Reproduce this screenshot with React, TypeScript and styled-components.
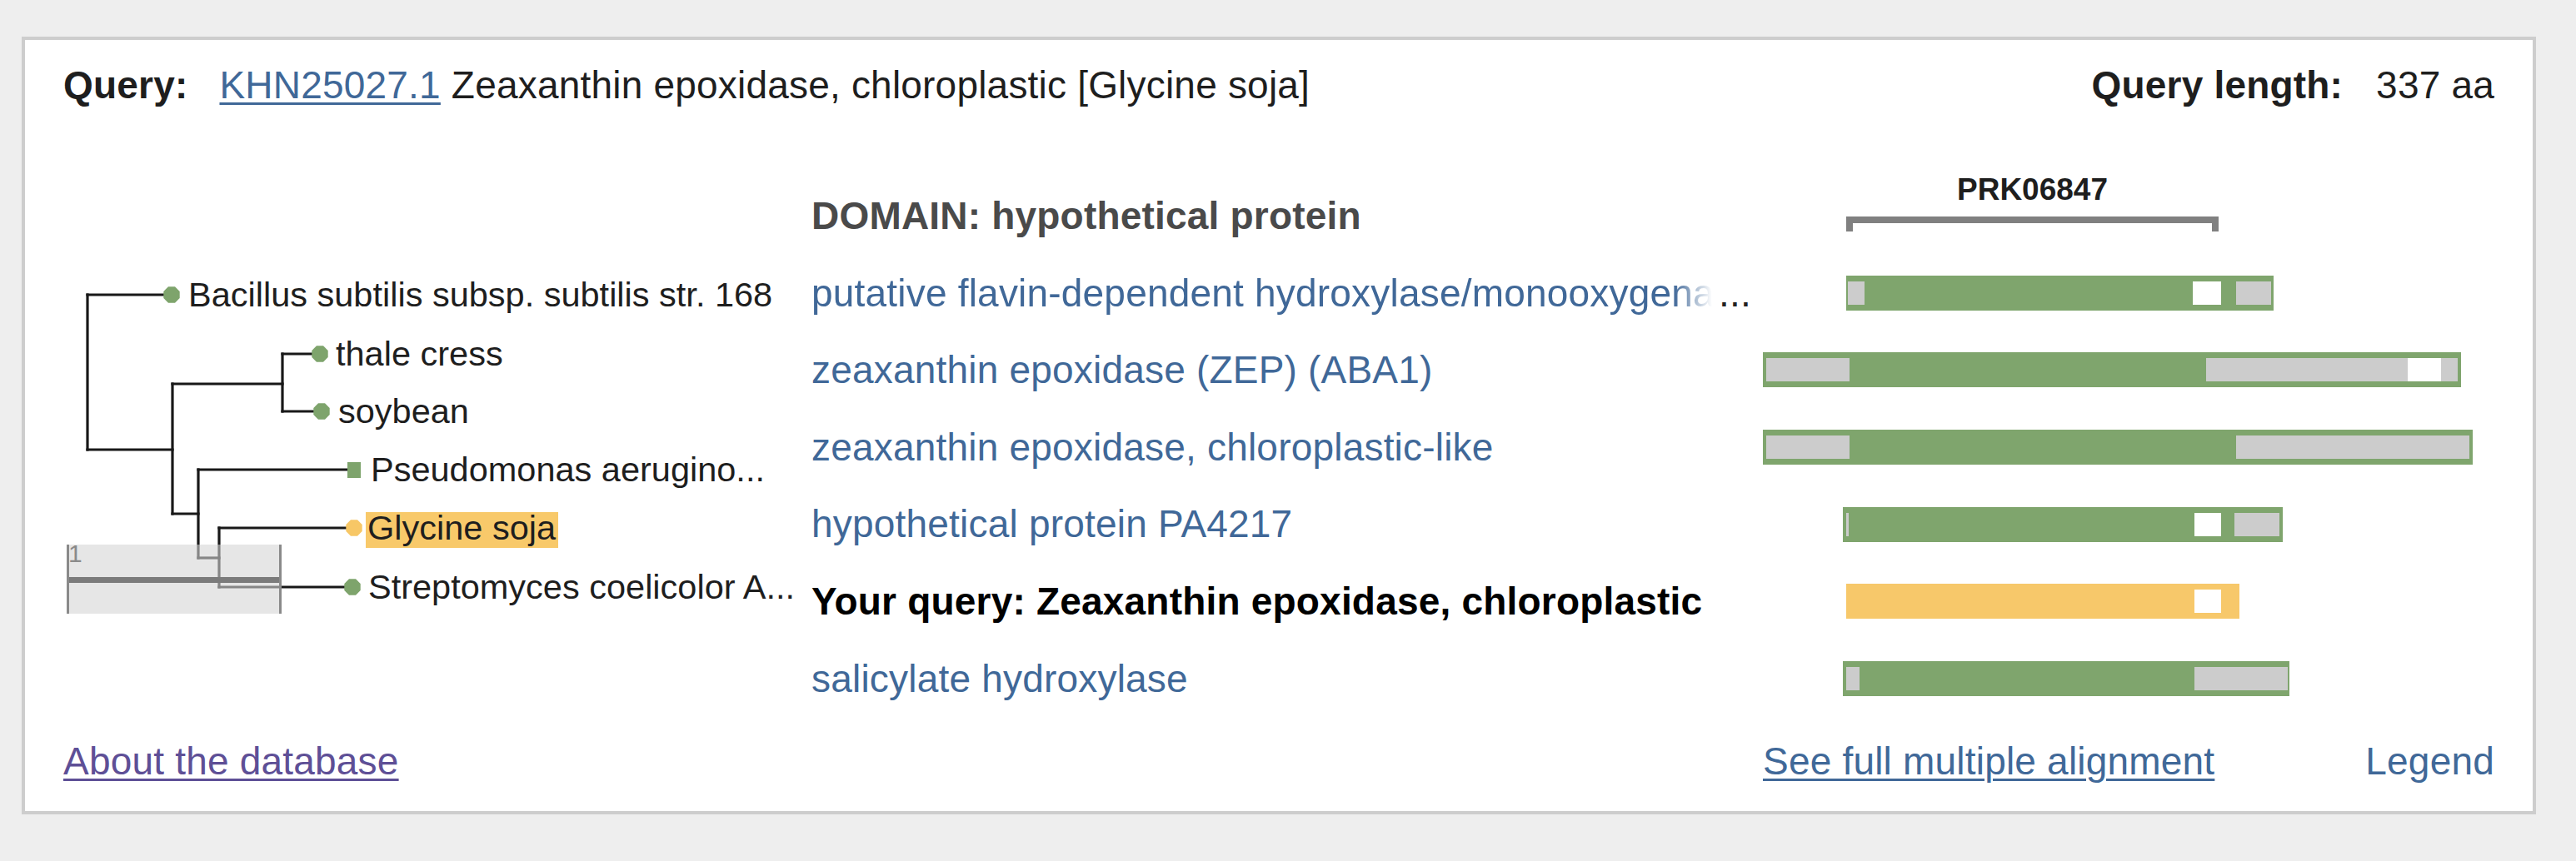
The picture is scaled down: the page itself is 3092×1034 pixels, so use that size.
import React from "react";
import styled, { createGlobalStyle } from "styled-components";

const GlobalStyle = createGlobalStyle`
  html, body { margin: 0; padding: 0; background: #eeeeee; }
  body { font-family: "Liberation Sans", Arial, Helvetica, sans-serif; }
`;

const ROW = 92.6;
const COLS = "898px 1142px 878px";

const Page = styled.div`
  box-sizing: border-box;
  min-height: 1034px;
  padding: 44px 48px 56px 26px;
  background: #eeeeee;
`;

const Panel = styled.section`
  background: #ffffff;
  border: 4px solid #cdcdcd;
  padding: 28px 46px 33px;
  font-size: 46px;
  letter-spacing: 0.2px;
  color: #1e1e1e;
`;

const QueryBar = styled.header`
  display: flex;
  justify-content: space-between;
  align-items: baseline;
  height: 53px;
  line-height: 53px;
  white-space: nowrap;
`;

const Label = styled.span<{ $gap: number }>`
  font-weight: 700;
  margin-right: ${(p) => p.$gap}px;
`;

const Link = styled.a<{ $underline?: boolean; $visited?: boolean }>`
  color: ${(p) => (p.$visited ? "#5e4f96" : "#406898")};
  text-decoration: ${(p) => (p.$underline ? "underline" : "none")};
  text-decoration-thickness: 3px;
  text-underline-offset: 5px;
  cursor: pointer;
`;

const Body = styled.div`
  margin-top: 84px;
  display: grid;
  grid-template-columns: ${COLS};
`;

const TreeCell = styled.div`
  height: ${ROW * 7}px;
`;

const TreeSvg = styled.svg`
  display: block;
  letter-spacing: 0;
  font-family: "Liberation Sans", Arial, Helvetica, sans-serif;
`;

const NameList = styled.div`
  display: grid;
  grid-auto-rows: ${ROW}px;
`;

type Kind = "domain" | "link" | "query";

const NameRow = styled.div<{ $kind: Kind }>`
  height: ${ROW}px;
  line-height: ${ROW}px;
  white-space: nowrap;
  font-weight: ${(p) => (p.$kind === "link" ? 400 : 700)};
  color: ${(p) =>
    p.$kind === "domain" ? "#4a4a4a" : p.$kind === "query" ? "#000000" : "#406898"};
`;

const FadeText = styled.span`
  display: inline-block;
  vertical-align: top;
  max-width: 1081px;
  overflow: hidden;
  -webkit-mask-image: linear-gradient(to right, #000 calc(100% - 46px), transparent);
  mask-image: linear-gradient(to right, #000 calc(100% - 46px), transparent);
`;

const Ellipsis = styled.span`
  color: #222;
  margin-left: 8px;
`;

const BarList = styled.div`
  display: grid;
  grid-auto-rows: ${ROW}px;
`;

const BarHeader = styled.div`
  width: 447px;
  margin-left: 100px;
`;

const Caption = styled.div`
  font-size: 37px;
  font-weight: 700;
  line-height: 30px;
  letter-spacing: 0;
  text-align: center;
  color: #1e1e1e;
`;

const Bracket = styled.div`
  box-sizing: border-box;
  margin-top: 17px;
  height: 18px;
  border: 8px solid #808080;
  border-bottom: none;
`;

const BarRow = styled.div`
  display: flex;
  align-items: center;
  height: ${ROW}px;
`;

const Track = styled.div<{ $tone: "hit" | "query" }>`
  position: relative;
  height: 42px;
  background: ${(p) => (p.$tone === "query" ? "#f7c86a" : "#7fa56d")};
`;

const Segment = styled.div<{ $fill: "gap" | "blank" }>`
  position: absolute;
  top: 7px;
  height: 28px;
  background: ${(p) => (p.$fill === "gap" ? "#cccccc" : "#ffffff")};
`;

const Footer = styled.footer`
  margin-top: 26.6px;
  display: grid;
  grid-template-columns: ${COLS};
  height: 53px;
  line-height: 53px;
  white-space: nowrap;
`;

const FooterLinks = styled.div`
  display: flex;
  justify-content: space-between;
`;

type Seg = { x: number; w: number; fill: "gap" | "blank" };
type Hit = {
  name: string;
  kind: Kind;
  faded?: boolean;
  bar: { x: number; w: number; tone: "hit" | "query"; segs: Seg[] };
};

const hits: Hit[] = [
  {
    name: "putative flavin-dependent hydroxylase/monooxygenase",
    kind: "link",
    faded: true,
    bar: {
      x: 100, w: 513, tone: "hit",
      segs: [
        { x: 2, w: 20, fill: "gap" },
        { x: 416, w: 34, fill: "blank" },
        { x: 468, w: 42, fill: "gap" },
      ],
    },
  },
  {
    name: "zeaxanthin epoxidase (ZEP) (ABA1)",
    kind: "link",
    bar: {
      x: 0, w: 838, tone: "hit",
      segs: [
        { x: 4, w: 100, fill: "gap" },
        { x: 532, w: 242, fill: "gap" },
        { x: 774, w: 40, fill: "blank" },
        { x: 814, w: 20, fill: "gap" },
      ],
    },
  },
  {
    name: "zeaxanthin epoxidase, chloroplastic-like",
    kind: "link",
    bar: {
      x: 0, w: 852, tone: "hit",
      segs: [
        { x: 4, w: 100, fill: "gap" },
        { x: 568, w: 280, fill: "gap" },
      ],
    },
  },
  {
    name: "hypothetical protein PA4217",
    kind: "link",
    bar: {
      x: 96, w: 528, tone: "hit",
      segs: [
        { x: 4, w: 3, fill: "gap" },
        { x: 422, w: 32, fill: "blank" },
        { x: 470, w: 54, fill: "gap" },
      ],
    },
  },
  {
    name: "Your query: Zeaxanthin epoxidase, chloroplastic",
    kind: "query",
    bar: {
      x: 100, w: 472, tone: "query",
      segs: [{ x: 418, w: 32, fill: "blank" }],
    },
  },
  {
    name: "salicylate hydroxylase",
    kind: "link",
    bar: {
      x: 96, w: 536, tone: "hit",
      segs: [
        { x: 4, w: 16, fill: "gap" },
        { x: 422, w: 112, fill: "gap" },
      ],
    },
  },
];

const treeLines = [
  "M105 354 V540", "M105 354 H198", "M105 540 H207",
  "M207 461 V617", "M207 461 H339", "M339 425 V494", "M339 425 H376", "M339 494 H377",
  "M207 617 H238", "M238 564 V670", "M238 564 H418", "M238 670 H263",
  "M263 634 V705", "M263 634 H417", "M263 705 H414",
];

const leaves = [
  { label: "Bacillus subtilis subsp. subtilis str. 168", y: 354, dot: 206, tx: 226 },
  { label: "thale cress", y: 425, dot: 384, tx: 403 },
  { label: "soybean", y: 494, dot: 386, tx: 406 },
  { label: "Pseudomonas aerugino...", y: 564, dot: 425, tx: 445, square: true },
  { label: "Glycine soja", y: 634, dot: 425, tx: 441, query: true },
  { label: "Streptomyces coelicolor A...", y: 705, dot: 423, tx: 442 },
];

function octagon(cx: number, cy: number, r: number) {
  const pts: string[] = [];
  for (let i = 0; i < 8; i++) {
    const a = (Math.PI / 8) * (2 * i + 1);
    pts.push(`${(cx + r * Math.cos(a)).toFixed(1)},${(cy + r * Math.sin(a)).toFixed(1)}`);
  }
  return pts.join(" ");
}

function Tree() {
  return (
    <TreeSvg width={898} height={648} viewBox="76 213 898 648">
      {treeLines.map((d) => (
        <path key={d} d={d} stroke="#181818" strokeWidth={3.2} fill="none" strokeLinecap="square" />
      ))}
      {leaves.map((l) => (
        <g key={l.label}>
          {l.query && <rect x={439} y={615} width={231} height={43} fill="#f8c96a" />}
          {l.square ? (
            <rect x={l.dot - 8} y={l.y - 9} width={16} height={19} fill="#7ea46c" />
          ) : (
            <polygon points={octagon(l.dot, l.y, 10.5)} fill={l.query ? "#f7c766" : "#7ea46c"} />
          )}
          <text x={l.tx} y={l.y + 14} fontSize={41.5} fill="#1e1e1e">
            {l.label}
          </text>
        </g>
      ))}
      <rect x={81} y={654} width={256} height={83} fill="#d4d4d4" fillOpacity={0.59} />
      <rect x={81} y={693} width={256} height={7} fill="#7b7b7b" />
      <rect x={80} y={654} width={3} height={83} fill="#8a8a8a" />
      <rect x={335} y={654} width={3} height={83} fill="#8a8a8a" />
      <text x={82} y={675} fontSize={30} fill="#8a8a8a">1</text>
    </TreeSvg>
  );
}

export default function App() {
  return (
    <>
      <GlobalStyle />
      <Page>
        <Panel>
          <QueryBar>
            <div>
              <Label $gap={38}>Query:</Label>
              <Link $underline>KHN25027.1</Link> Zeaxanthin epoxidase, chloroplastic [Glycine soja]
            </div>
            <div>
              <Label $gap={40}>Query length:</Label>337 aa
            </div>
          </QueryBar>

          <Body>
            <TreeCell>
              <Tree />
            </TreeCell>

            <NameList>
              <NameRow $kind="domain">DOMAIN: hypothetical protein</NameRow>
              {hits.map((h) => (
                <NameRow key={h.name} $kind={h.kind}>
                  {h.kind === "query" ? (
                    h.name
                  ) : h.faded ? (
                    <>
                      <Link>
                        <FadeText>{h.name}</FadeText>
                      </Link>
                      <Ellipsis>...</Ellipsis>
                    </>
                  ) : (
                    <Link>{h.name}</Link>
                  )}
                </NameRow>
              ))}
            </NameList>

            <BarList>
              <BarHeader>
                <Caption>PRK06847</Caption>
                <Bracket />
              </BarHeader>
              {hits.map((h) => (
                <BarRow key={h.name}>
                  <Track $tone={h.bar.tone} style={{ marginLeft: h.bar.x, width: h.bar.w }}>
                    {h.bar.segs.map((s, i) => (
                      <Segment key={i} $fill={s.fill} style={{ left: s.x, width: s.w }} />
                    ))}
                  </Track>
                </BarRow>
              ))}
            </BarList>
          </Body>

          <Footer>
            <div>
              <Link $underline $visited>About the database</Link>
            </div>
            <div />
            <FooterLinks>
              <Link $underline>See full multiple alignment</Link>
              <Link>Legend</Link>
            </FooterLinks>
          </Footer>
        </Panel>
      </Page>
    </>
  );
}
